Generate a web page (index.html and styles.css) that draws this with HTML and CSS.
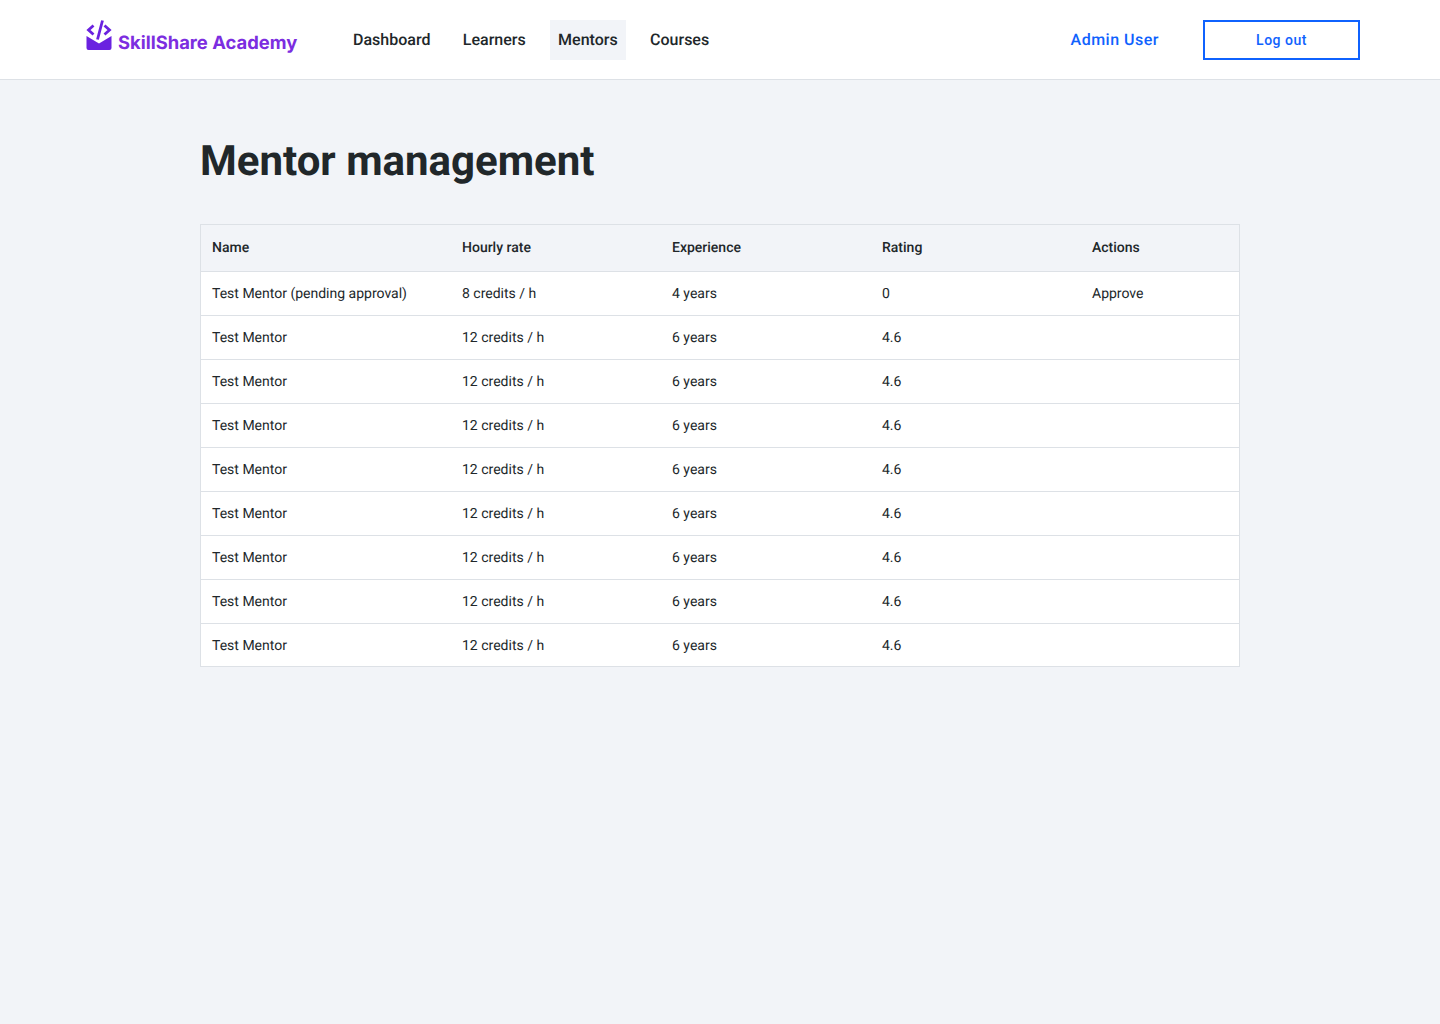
FILE: index.html
```html
<!DOCTYPE html>
<html lang="en">
<head>
    <meta charset="UTF-8">
    <meta name="viewport" content="width=device-width, initial-scale=1.0">
    <title>Mentor management</title>
    <link rel="stylesheet" href="styles.css">
</head>
<body>
    <header class="topbar">
        <a class="logo" href="#">
            <svg class="logo-icon" width="26" height="30" viewBox="0 0 26 30">
                <path d="M7.500 5.500 2.500 10l5 4.500M18.500 5.500 23.500 10l-5 4.500M16.500 0.500 11.500 19.500" fill="none" stroke="#6a22e0" stroke-width="2.800"/>
                <path d="M0.500 16 13 23.500 25.500 16V28a2 2 0 0 1-2 2H2.500a2 2 0 0 1-2-2Z" fill="#6a22e0"/>
            </svg>
            <span class="logo-text">SkillShare Academy</span>
        </a>
        <nav class="main-nav">
            <a href="#">Dashboard</a>
            <a href="#">Learners</a>
            <a href="#" class="active">Mentors</a>
            <a href="#">Courses</a>
        </nav>
        <a class="user-link" href="#">Admin User</a>
        <button class="logout-button">Log out</button>
    </header>

    <main class="content">
        <h1>Mentor management</h1>
        <table class="mentor-table">
            <thead>
                <tr>
                    <th class="col-name">Name</th>
                    <th class="col-mid">Hourly rate</th>
                    <th class="col-mid">Experience</th>
                    <th class="col-mid">Rating</th>
                    <th>Actions</th>
                </tr>
            </thead>
            <tbody>
                <tr><td>Test Mentor (pending approval)</td><td>8 credits / h</td><td>4 years</td><td>0</td><td>Approve</td></tr>
                <tr><td>Test Mentor</td><td>12 credits / h</td><td>6 years</td><td>4.6</td><td></td></tr>
                <tr><td>Test Mentor</td><td>12 credits / h</td><td>6 years</td><td>4.6</td><td></td></tr>
                <tr><td>Test Mentor</td><td>12 credits / h</td><td>6 years</td><td>4.6</td><td></td></tr>
                <tr><td>Test Mentor</td><td>12 credits / h</td><td>6 years</td><td>4.6</td><td></td></tr>
                <tr><td>Test Mentor</td><td>12 credits / h</td><td>6 years</td><td>4.6</td><td></td></tr>
                <tr><td>Test Mentor</td><td>12 credits / h</td><td>6 years</td><td>4.6</td><td></td></tr>
                <tr><td>Test Mentor</td><td>12 credits / h</td><td>6 years</td><td>4.6</td><td></td></tr>
                <tr><td>Test Mentor</td><td>12 credits / h</td><td>6 years</td><td>4.6</td><td></td></tr>
            </tbody>
        </table>
    </main>
</body>
</html>
```

FILE: styles.css
```css
* {
    box-sizing: border-box;
}
body {
    margin: 0;
    min-height: 1024px;
    font-family: Roboto, Arial, sans-serif;
    background-color: #f2f4f8;
    color: #21272a;
    text-rendering: geometricPrecision;
}
a {
    text-decoration: none;
    color: inherit;
}
.topbar {
    display: flex;
    align-items: center;
    height: 80px;
    padding: 0 80px;
    background-color: #ffffff;
    border-bottom: 1px solid #dde1e6;
}
.logo {
    display: flex;
    align-items: flex-end;
    gap: 6px;
    width: 265px;
    padding-left: 6px;
    margin-top: -10px;
}
.logo-icon {
    display: block;
}
.logo-text {
    margin-bottom: -4px;
    font-family: Inter, Arial, sans-serif;
    font-size: 18.400px;
    font-weight: 700;
    line-height: 22px;
    color: #7c2de0;
    white-space: nowrap;
}
.main-nav {
    display: flex;
    gap: 16.400px;
}
.main-nav a {
    height: 40px;
    padding: 0 8px;
    font-size: 16px;
    font-weight: 500;
    line-height: 40px;
}
.main-nav a.active {
    background-color: #f2f4f8;
}
.user-link {
    margin-left: auto;
    margin-right: 44px;
    font-size: 16px;
    font-weight: 500;
    letter-spacing: 0.5px;
    color: #0f62fe;
}
.logout-button {
    width: 157px;
    height: 40px;
    padding: 0;
    font-family: inherit;
    font-size: 14px;
    font-weight: 500;
    letter-spacing: 0.5px;
    color: #0f62fe;
    background-color: #ffffff;
    border: 2px solid #0f62fe;
}
.content {
    width: 1040px;
    margin: 0 auto;
}
h1 {
    margin: 0;
    padding: 57px 0 37px;
    font-size: 42px;
    font-weight: 700;
    line-height: 50px;
}
.mentor-table {
    width: 100%;
    border-collapse: separate;
    border-spacing: 0;
    table-layout: fixed;
    font-size: 14px;
    border: 1px solid #dde1e6;
}
.col-name {
    width: 250px;
}
.col-mid {
    width: 210px;
}
.mentor-table th {
    height: 47px;
    padding: 0 11px;
    text-align: left;
    font-weight: 500;
    border-bottom: 1px solid #dde1e6;
}
.mentor-table td {
    height: 44px;
    padding: 0 11px;
    background-color: #ffffff;
    border-bottom: 1px solid #dde1e6;
}
.mentor-table tr:last-child td {
    height: 42px;
    padding-top: 2px;
    border-bottom: none;
}
```
